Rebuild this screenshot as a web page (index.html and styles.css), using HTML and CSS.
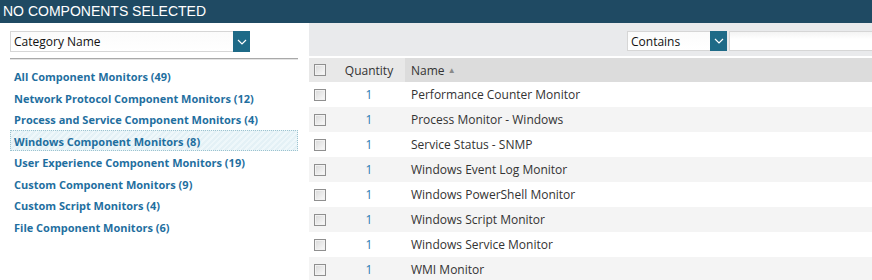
FILE: index.html
```html
<!DOCTYPE html>
<html lang="en">
<head>
    <meta charset="UTF-8">
    <title>Component Picker</title>
    <link rel="stylesheet" href="styles.css">
</head>
<body>
    <div class="title-bar">NO COMPONENTS SELECTED</div>
    <div class="main">
        <!-- Category list -->
        <div class="side">
            <div class="select cat-select">
                <span class="select-text">Category Name</span>
                <span class="select-btn"><svg width="10" height="6" viewBox="0 0 10 6"><path d="M1 1 L5 5 L9 1" fill="none" stroke="#fff" stroke-width="1.2"/></svg></span>
            </div>
            <div class="side-rule"></div>
            <ul class="cat-list">
                <li><a href="#">All Component Monitors (49)</a></li>
                <li><a href="#">Network Protocol Component Monitors (12)</a></li>
                <li><a href="#">Process and Service Component Monitors (4)</a></li>
                <li class="selected"><a href="#">Windows Component Monitors (8)</a></li>
                <li><a href="#">User Experience Component Monitors (19)</a></li>
                <li><a href="#">Custom Component Monitors (9)</a></li>
                <li><a href="#">Custom Script Monitors (4)</a></li>
                <li><a href="#">File Component Monitors (6)</a></li>
            </ul>
        </div>

        <!-- Component grid -->
        <div class="grid">
            <div class="toolbar">
                <div class="select filter-select">
                    <span class="select-text">Contains</span>
                    <span class="select-btn"><svg width="10" height="6" viewBox="0 0 10 6"><path d="M1 1 L5 5 L9 1" fill="none" stroke="#fff" stroke-width="1.2"/></svg></span>
                </div>
                <input type="text" class="filter-input">
            </div>
            <table class="comp-table">
                <thead>
                    <tr>
                        <th class="col-check"><span class="cb"></span></th>
                        <th class="col-qty">Quantity</th>
                        <th class="col-name">Name <span class="sort">&#9650;</span></th>
                    </tr>
                </thead>
                <tbody>
                    <tr><td class="col-check"><span class="cb"></span></td><td class="col-qty">1</td><td class="col-name">Performance Counter Monitor</td></tr>
                    <tr><td class="col-check"><span class="cb"></span></td><td class="col-qty">1</td><td class="col-name">Process Monitor - Windows</td></tr>
                    <tr><td class="col-check"><span class="cb"></span></td><td class="col-qty">1</td><td class="col-name">Service Status - SNMP</td></tr>
                    <tr><td class="col-check"><span class="cb"></span></td><td class="col-qty">1</td><td class="col-name">Windows Event Log Monitor</td></tr>
                    <tr><td class="col-check"><span class="cb"></span></td><td class="col-qty">1</td><td class="col-name">Windows PowerShell Monitor</td></tr>
                    <tr><td class="col-check"><span class="cb"></span></td><td class="col-qty">1</td><td class="col-name">Windows Script Monitor</td></tr>
                    <tr><td class="col-check"><span class="cb"></span></td><td class="col-qty">1</td><td class="col-name">Windows Service Monitor</td></tr>
                    <tr><td class="col-check"><span class="cb"></span></td><td class="col-qty">1</td><td class="col-name">WMI Monitor</td></tr>
                </tbody>
            </table>
        </div>
    </div>
</body>
</html>
```

FILE: styles.css
```css
body {
    margin: 0;
    padding: 0;
    background: #fff;
    font-family: "Open Sans", Arial, sans-serif;
    color: #333;
    overflow: hidden;
}
.title-bar {
    height: 23px;
    line-height: 23px;
    background: #1f4a63;
    color: #fff;
    font-family: Arial, "Liberation Sans", sans-serif;
    font-size: 14px;
    padding-left: 3px;
    white-space: nowrap;
}
.main {
    display: flex;
}
.side {
    width: 288px;
    padding: 8px 0 0 10px;
    flex-shrink: 0;
}
.select {
    display: flex;
    height: 21px;
    border: 1px solid #d6d6d6;
    border-right: none;
    background: linear-gradient(#fbfbfb, #fff);
    box-sizing: border-box;
}
.select-text {
    flex: 1;
    font-size: 12px;
    line-height: 20px;
    padding-left: 3px;
    color: #111;
}
.select-btn {
    width: 17px;
    background: #1e6a87;
    display: flex;
    align-items: center;
    justify-content: center;
    margin: -1px 0;
}
.cat-select {
    width: 240px;
}
.side-rule {
    height: 2px;
    background: #a9a9a9;
    border-bottom: 1px solid #e4e4e4;
    margin-top: 6px;
    box-sizing: border-box;
}
.cat-list {
    list-style: none;
    margin: 5px 0 0 0;
    padding: 0;
}
.cat-list li {
    height: 21.5px;
    line-height: 21.5px;
    padding-left: 4px;
    box-sizing: border-box;
}
.cat-list a {
    color: #1f6f9f;
    font-weight: bold;
    font-size: 11px;
    text-decoration: none;
}
.cat-list li.selected {
    border: 1px dotted #9cc3cf;
    line-height: 19.5px;
    padding-left: 3px;
    background: repeating-linear-gradient(135deg, #e4f1f6 0 2px, #eef7fa 2px 4px);
}
.grid {
    flex: 1;
    margin-left: 11px;
}
.toolbar {
    height: 34px;
    background: #e9eaec;
    border-bottom: 1px solid #fff;
    display: flex;
    justify-content: flex-end;
    align-items: flex-start;
    padding-top: 8px;
    box-sizing: border-box;
    margin-bottom: 1px;
}
.filter-select {
    width: 100px;
    height: 20px;
}
.filter-select .select-text {
    line-height: 19px;
}
.filter-input {
    width: 143px;
    height: 20px;
    margin: 0 0 0 2px;
    border: 1px solid #d6d6d6;
    border-right: none;
    background: linear-gradient(#f4f4f4, #fff 40%);
    box-sizing: border-box;
    padding: 0;
}
.comp-table {
    width: 100%;
    border-collapse: collapse;
    table-layout: fixed;
    font-size: 12px;
}
.comp-table th {
    height: 24px;
    font-weight: normal;
    background: #e8e8e8;
    color: #333;
    padding: 0;
}
.comp-table th.col-name {
    background: #dcdcdc;
    text-align: left;
}
.comp-table td {
    height: 25px;
    padding: 0;
}
.comp-table tbody tr:nth-child(even) {
    background: #f4f4f4;
}
.comp-table .col-check {
    width: 19px;
    padding-left: 5px;
    text-align: left;
}
.comp-table .col-qty {
    width: 72px;
    text-align: center;
}
td.col-qty {
    color: #2a7ab0;
}
.comp-table .col-name {
    padding-left: 6px;
}
.sort {
    font-size: 8px;
    color: #8a8a8a;
    vertical-align: 2px;
}
.cb {
    display: block;
    width: 10px;
    height: 10px;
    border: 1px solid #8f8f8f;
    background: linear-gradient(135deg, #d8d8d8, #fbfbfb);
    box-shadow: inset 0 0 0 1px #f2f2f2;
}
```
